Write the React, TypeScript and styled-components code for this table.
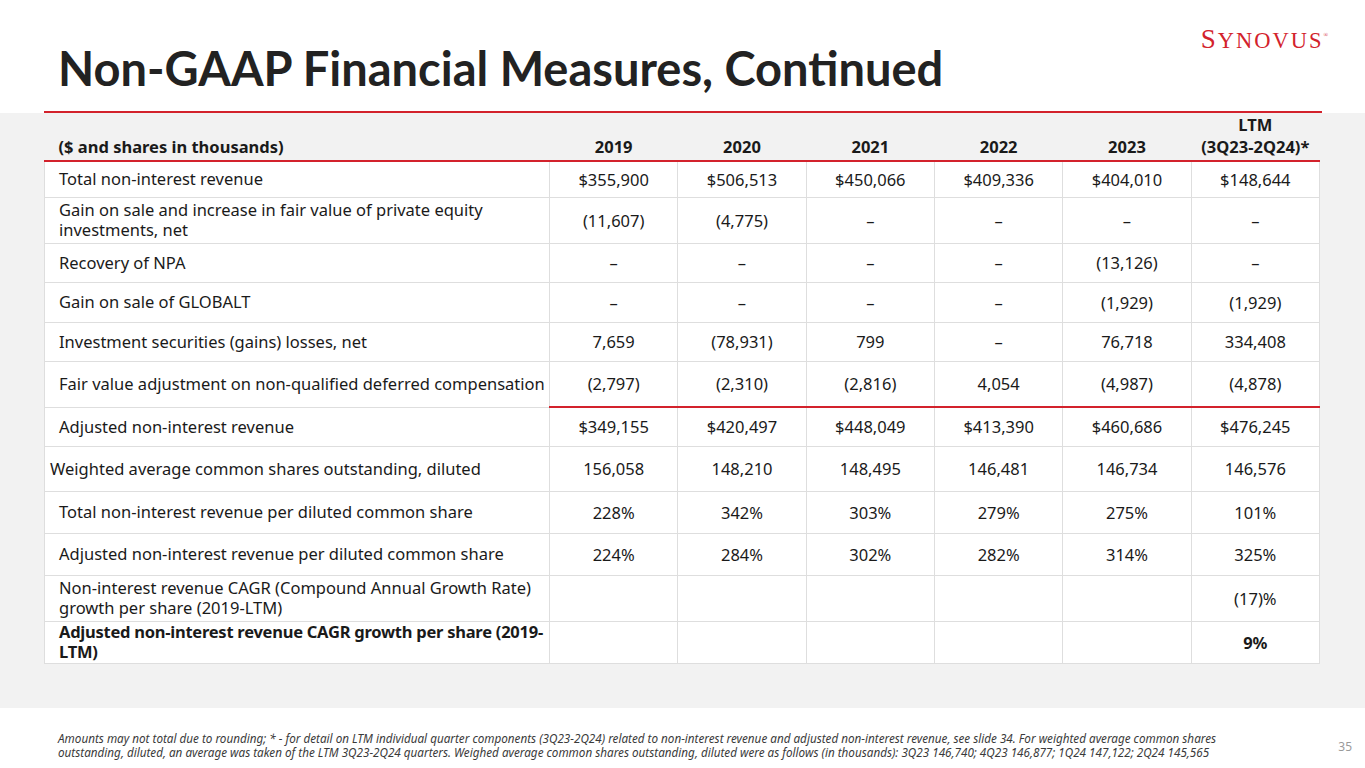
import styled, { createGlobalStyle } from "styled-components";

const GlobalStyle = createGlobalStyle`
  html, body {
    margin: 0;
    padding: 0;
    background: #ffffff;
  }
  body {
    font-family: "Noto Sans", Lato, sans-serif;
    color: #1a1a1a;
  }
`;

const RED = "#d3222c";

const Slide = styled.div`
  width: 1365px;
  height: 768px;
  display: flex;
  flex-direction: column;
  overflow: hidden;
  background: #ffffff;
`;

const TopBar = styled.header`
  height: 111px;
  display: flex;
  justify-content: space-between;
  align-items: flex-start;
  padding: 0 37px 0 58px;
`;

const Title = styled.h1`
  margin: 40px 0 0;
  font-family: Lato, "Noto Sans", sans-serif;
  font-weight: 700;
  font-size: 47px;
  line-height: 56px;
  color: #222222;
`;

const Logo = styled.div`
  margin-top: 21px;
  font-family: "Liberation Serif", "Times New Roman", serif;
  color: ${RED};
  font-size: 22.5px;
  letter-spacing: 2px;
  line-height: 28px;
  white-space: nowrap;
`;

const BigS = styled.span`
  font-size: 27px;
`;

const Reg = styled.sup`
  font-size: 6px;
  vertical-align: 11px;
  letter-spacing: 0;
`;

const Rule = styled.div`
  height: 2px;
  margin: 0 43px 0 44px;
  background: ${RED};
`;

const Band = styled.section`
  height: 595px;
  background: #f2f2f2;
  padding: 0 45px 0 44px;
`;

const Table = styled.table`
  width: 1276px;
  table-layout: fixed;
  border-collapse: collapse;
  font-size: 16.5px;
`;

const HeadCell = styled.th<{ $left?: boolean }>`
  height: 45px;
  padding: 0 0 2px ${({ $left }) => ($left ? "14px" : "0")};
  text-align: ${({ $left }) => ($left ? "left" : "center")};
  vertical-align: bottom;
  font-weight: 700;
  line-height: 22px;
  border-bottom: 2px solid ${RED};
  color: #1a1a1a;
`;

const Row = styled.tr<{ $h: number }>`
  height: ${({ $h }) => $h}px;
  background: #ffffff;
`;

const Label = styled.td<{ $bold?: boolean; $indent?: number }>`
  padding: 0 ${({ $bold }) => ($bold ? 0 : 4)}px 0 ${({ $indent }) => $indent ?? 14}px;
  border: 1px solid #dedede;
  line-height: 20px;
  font-weight: ${({ $bold }) => ($bold ? 700 : 400)};
  letter-spacing: ${({ $bold }) => ($bold ? "-0.25px" : "0")};
  vertical-align: middle;
`;

const Num = styled.td<{ $bold?: boolean; $redTop?: boolean }>`
  padding: 0;
  text-align: center;
  border: 1px solid #dedede;
  border-top: ${({ $redTop }) =>
    $redTop ? `2px solid ${RED}` : "1px solid #dedede"};
  font-weight: ${({ $bold }) => ($bold ? 700 : 400)};
  vertical-align: middle;
`;

const Footer = styled.footer`
  flex: 1;
  display: flex;
  justify-content: space-between;
  align-items: flex-start;
  padding: 24px 13px 0 58px;
`;

const Note = styled.p`
  margin: 0;
  font-style: italic;
  font-size: 11.7px;
  line-height: 13.5px;
  color: #3a3a3a;
  white-space: nowrap;
`;

const PageNo = styled.span`
  margin-top: 6px;
  font-size: 12px;
  color: #9a9a9a;
`;

type Line = {
  label: string;
  values: string[];
  h: number;
  bold?: boolean;
  indent?: number;
  redTop?: boolean;
};

const years = ["2019", "2020", "2021", "2022", "2023"];
const D = "–";

const lines: Line[] = [
  {
    label: "Total non-interest revenue",
    values: ["$355,900", "$506,513", "$450,066", "$409,336", "$404,010", "$148,644"],
    h: 36,
  },
  {
    label: "Gain on sale and increase in fair value of private equity investments, net",
    values: ["(11,607)", "(4,775)", D, D, D, D],
    h: 46,
  },
  { label: "Recovery of NPA", values: [D, D, D, D, "(13,126)", D], h: 39 },
  { label: "Gain on sale of GLOBALT", values: [D, D, D, D, "(1,929)", "(1,929)"], h: 40 },
  {
    label: "Investment securities (gains) losses, net",
    values: ["7,659", "(78,931)", "799", D, "76,718", "334,408"],
    h: 39,
  },
  {
    label: "Fair value adjustment on non-qualified deferred compensation",
    values: ["(2,797)", "(2,310)", "(2,816)", "4,054", "(4,987)", "(4,878)"],
    h: 46,
  },
  {
    label: "Adjusted non-interest revenue",
    values: ["$349,155", "$420,497", "$448,049", "$413,390", "$460,686", "$476,245"],
    h: 39,
    redTop: true,
  },
  {
    label: "Weighted average common shares outstanding, diluted",
    values: ["156,058", "148,210", "148,495", "146,481", "146,734", "146,576"],
    h: 45,
    indent: 5,
  },
  {
    label: "Total non-interest revenue per diluted common share",
    values: ["228%", "342%", "303%", "279%", "275%", "101%"],
    h: 42,
  },
  {
    label: "Adjusted non-interest revenue per diluted common share",
    values: ["224%", "284%", "302%", "282%", "314%", "325%"],
    h: 42,
  },
  {
    label: "Non-interest revenue CAGR (Compound Annual Growth Rate) growth per share (2019-LTM)",
    values: ["", "", "", "", "", "(17)%"],
    h: 46,
  },
  {
    label: "Adjusted non-interest revenue CAGR growth per share (2019-LTM)",
    values: ["", "", "", "", "", "9%"],
    h: 42,
    bold: true,
  },
];

export default function App() {
  return (
    <>
      <GlobalStyle />
      <Slide>
        <TopBar>
          <Title>Non-GAAP Financial Measures, Continued</Title>
          <Logo>
            <BigS>S</BigS>YNOVUS<Reg>®</Reg>
          </Logo>
        </TopBar>
        <Rule />
        <Band>
          <Table>
            <colgroup>
              <col style={{ width: 505 }} />
              {[0, 1, 2, 3, 4, 5].map((i) => (
                <col key={i} />
              ))}
            </colgroup>
            <thead>
              <tr>
                <HeadCell $left>($ and shares in thousands)</HeadCell>
                {years.map((y) => (
                  <HeadCell key={y}>{y}</HeadCell>
                ))}
                <HeadCell>
                  LTM
                  <br />
                  (3Q23-2Q24)*
                </HeadCell>
              </tr>
            </thead>
            <tbody>
              {lines.map((l) => (
                <Row key={l.label} $h={l.h}>
                  <Label $bold={l.bold} $indent={l.indent}>
                    {l.label}
                  </Label>
                  {l.values.map((v, i) => (
                    <Num key={i} $bold={l.bold} $redTop={l.redTop}>
                      {v}
                    </Num>
                  ))}
                </Row>
              ))}
            </tbody>
          </Table>
        </Band>
        <Footer>
          <Note>
            Amounts may not total due to rounding; * - for detail on LTM individual quarter
            components (3Q23-2Q24) related to non-interest revenue and adjusted non-interest
            revenue, see slide 34. For weighted average common shares
            <br />
            outstanding, diluted, an average was taken of the LTM 3Q23-2Q24 quarters. Weighed
            average common shares outstanding, diluted were as follows (in thousands): 3Q23
            146,740; 4Q23 146,877; 1Q24 147,122; 2Q24 145,565
          </Note>
          <PageNo>35</PageNo>
        </Footer>
      </Slide>
    </>
  );
}
